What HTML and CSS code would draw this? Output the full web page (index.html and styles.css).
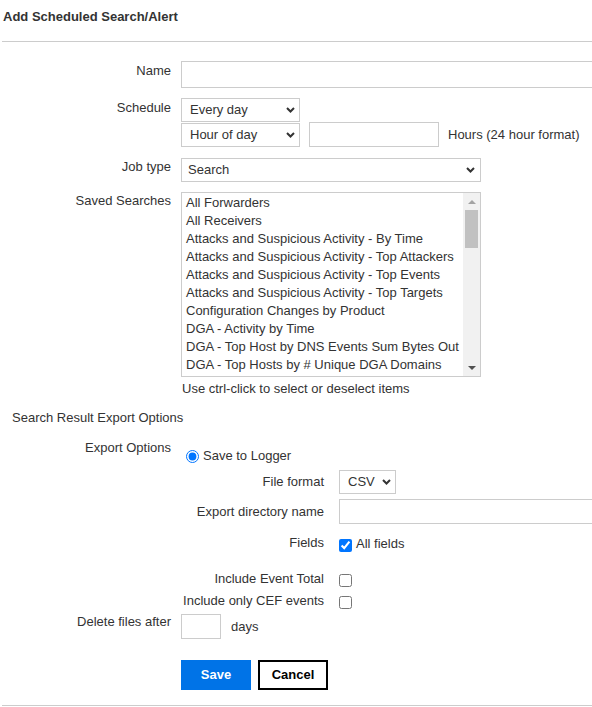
FILE: index.html
```html
<!DOCTYPE html>
<html>
<head>
<meta charset="utf-8">
<title>Add Scheduled Search/Alert</title>
<link rel="stylesheet" href="styles.css">
</head>
<body>
<div class="page">
  <div class="title">Add Scheduled Search/Alert</div>
  <div class="divider"></div>

  <form class="form">
    <div class="row r-name">
      <label class="lbl lbl-name">Name</label>
      <div class="ctl"><input class="txt name-input" type="text"></div>
    </div>

    <div class="row r-sched">
      <label class="lbl lbl-sched">Schedule</label>
      <div class="ctl">
        <div class="selwrap w-every">
          <select class="sel"><option>Every day</option></select>
          <svg class="chev" viewBox="0 0 9 6" width="9" height="6"><path d="M1 1 L4.5 4.5 L8 1" fill="none" stroke="#333" stroke-width="2"/></svg>
        </div>
        <div class="sched-line">
          <div class="selwrap w-hour">
            <select class="sel"><option>Hour of day</option></select>
            <svg class="chev" viewBox="0 0 9 6" width="9" height="6"><path d="M1 1 L4.5 4.5 L8 1" fill="none" stroke="#333" stroke-width="2"/></svg>
          </div>
          <input class="txt hours-input" type="text">
          <span class="hours-hint">Hours (24 hour format)</span>
        </div>
      </div>
    </div>

    <div class="row r-job">
      <label class="lbl lbl-job">Job type</label>
      <div class="ctl">
        <div class="selwrap w-job">
          <select class="sel"><option>Search</option></select>
          <svg class="chev" viewBox="0 0 9 6" width="9" height="6"><path d="M1 1 L4.5 4.5 L8 1" fill="none" stroke="#333" stroke-width="2"/></svg>
        </div>
      </div>
    </div>

    <div class="row r-saved">
      <label class="lbl lbl-saved">Saved Searches</label>
      <div class="ctl">
        <div class="listbox">
          <div class="items">
            <div class="item">All Forwarders</div>
            <div class="item">All Receivers</div>
            <div class="item">Attacks and Suspicious Activity - By Time</div>
            <div class="item">Attacks and Suspicious Activity - Top Attackers</div>
            <div class="item">Attacks and Suspicious Activity - Top Events</div>
            <div class="item">Attacks and Suspicious Activity - Top Targets</div>
            <div class="item">Configuration Changes by Product</div>
            <div class="item">DGA - Activity by Time</div>
            <div class="item">DGA - Top Host by DNS Events Sum Bytes Out</div>
            <div class="item">DGA - Top Hosts by # Unique DGA Domains</div>
          </div>
          <div class="sb">
            <div class="sb-btn"><span class="tri-up"></span></div>
            <div class="sb-thumb"></div>
            <div class="sb-fill"></div>
            <div class="sb-btn"><span class="tri-down"></span></div>
          </div>
        </div>
        <div class="list-hint">Use ctrl-click to select or deselect items</div>
      </div>
    </div>

    <div class="section">Search Result Export Options</div>

    <div class="row r-export">
      <label class="lbl">Export Options</label>
      <div class="ctl ctl-export">
        <label class="radio-line"><input type="radio" class="radio" name="exp" checked>Save to Logger</label>

        <div class="sub sub-file">
          <span class="sublbl">File format</span>
          <div class="selwrap w-csv">
            <select class="sel"><option>CSV</option></select>
            <svg class="chev" viewBox="0 0 9 6" width="9" height="6"><path d="M1 1 L4.5 4.5 L8 1" fill="none" stroke="#333" stroke-width="2"/></svg>
          </div>
        </div>

        <div class="sub sub-dir">
          <span class="sublbl">Export directory name</span>
          <input class="txt dir-input" type="text">
        </div>

        <div class="sub sub-check sub-fields">
          <span class="sublbl">Fields</span>
          <input type="checkbox" class="cb" checked>
          <span class="cb-text">All fields</span>
        </div>

        <div class="sub sub-check sub-total">
          <span class="sublbl">Include Event Total</span>
          <input type="checkbox" class="cb">
        </div>

        <div class="sub sub-check sub-cef">
          <span class="sublbl">Include only CEF events</span>
          <input type="checkbox" class="cb">
        </div>
      </div>
    </div>

    <div class="row r-delete">
      <label class="lbl">Delete files after</label>
      <div class="ctl del-line">
        <input class="txt del-input" type="text">
        <span class="days">days</span>
      </div>
    </div>

    <div class="buttons">
      <button type="button" class="btn btn-save">Save</button>
      <button type="button" class="btn btn-cancel">Cancel</button>
    </div>
  </form>

  <div class="divider bottom"></div>
</div>
</body>
</html>
```

FILE: styles.css
```css
html, body {
  margin: 0;
  padding: 0;
  overflow: hidden;
  background: #fff;
}

body {
  font-family: "Liberation Sans", Arial, sans-serif;
  font-size: 13px;
  line-height: 16px;
  color: #333;
}

.page {
  width: 592px;
  overflow: hidden;
}

.title {
  font-weight: bold;
  padding: 9px 0 0 3px;
  height: 16px;
}

.divider {
  margin: 16px 0 0 2px;
  height: 0;
  border-top: 1px solid #cccccc;
}

.divider.bottom {
  margin-top: 15px;
}

.form {
  margin: 0;
}

.row {
  display: flex;
  align-items: flex-start;
}

.lbl {
  flex: none;
  width: 171px;
  text-align: right;
}

.ctl {
  margin-left: 10px;
  flex: none;
}

.r-name { margin-top: 19px; }
.r-sched { margin-top: 10px; }
.r-job { margin-top: 11px; }
.r-saved { margin-top: 10px; }
.r-export { margin-top: 14px; }
.r-delete { margin-top: 5px; }

.lbl-name { padding-top: 2px; }
.lbl-sched { padding-top: 2px; }
.lbl-job { padding-top: 1px; }
.lbl-saved { padding-top: 1px; }

.txt {
  box-sizing: border-box;
  border: 1px solid #cccccc;
  border-radius: 0;
  background: #fff;
  margin: 0;
  padding: 0 6px;
  font: inherit;
  color: #333;
  outline: none;
  display: block;
}

/* fields that continue past the right edge of the frame */
.name-input {
  width: 411px;
  height: 27px;
  border-right: none;
}

.selwrap {
  position: relative;
  display: block;
}

.sel {
  -webkit-appearance: none;
  appearance: none;
  box-sizing: border-box;
  border: 1px solid #cccccc;
  border-radius: 0;
  background: #fff;
  margin: 0;
  padding: 0 0 0 8px;
  height: 24px;
  width: 100%;
  font: inherit;
  color: #333;
  outline: none;
  display: block;
}

.chev {
  position: absolute;
  right: 5px;
  top: 9px;
  pointer-events: none;
}

.w-every { width: 119px; }
.w-hour { width: 119px; margin-top: 1px; }
.w-job { width: 300px; }
.w-job .sel { padding-left: 6px; }
.w-job .chev { right: 6px; }
.w-csv { width: 57px; }

.sched-line {
  display: flex;
  align-items: flex-start;
}

.hours-input {
  width: 130px;
  height: 25px;
  margin-left: 9px;
}

.hours-hint {
  margin-left: 9px;
  align-self: center;
  white-space: nowrap;
}

/* list box */
.listbox {
  box-sizing: border-box;
  width: 300px;
  height: 185px;
  border: 1px solid #cccccc;
  background: #fff;
  display: flex;
  overflow: hidden;
}

.items {
  flex: 1;
  padding: 1px 0 0 4px;
  overflow: hidden;
}

.item {
  line-height: 18px;
  white-space: nowrap;
}

.sb {
  flex: none;
  width: 17px;
  background: #f1f1f1;
  display: flex;
  flex-direction: column;
}

.sb-btn {
  height: 17px;
  display: flex;
  align-items: center;
  justify-content: center;
}

.tri-up {
  width: 0;
  height: 0;
  border-left: 4px solid transparent;
  border-right: 4px solid transparent;
  border-bottom: 4px solid #a3a3a3;
}

.tri-down {
  width: 0;
  height: 0;
  border-left: 4px solid transparent;
  border-right: 4px solid transparent;
  border-top: 4px solid #505050;
}

.sb-thumb {
  height: 38px;
  margin: 0 2px;
  background: #c1c1c1;
}

.sb-fill {
  flex: 1;
}

.list-hint {
  margin-top: 4px;
  margin-left: 1px;
  white-space: nowrap;
}

.section {
  margin-top: 13px;
  padding-left: 12px;
}

/* export options */
.ctl-export {
  padding-top: 8px;
}

.radio-line {
  display: flex;
  align-items: center;
  height: 16px;
  white-space: nowrap;
}

.radio {
  margin: 0 4px 0 5px;
  width: 13px;
  height: 13px;
}

.sub {
  display: flex;
  align-items: center;
}

.sublbl {
  flex: none;
  width: 143px;
  margin-right: 15px;
  text-align: right;
  white-space: nowrap;
}

.sub-file { margin-top: 6px; }
.sub-dir { margin-top: 5px; }

.dir-input {
  width: 253px;
  height: 25px;
  border-right: none;
}

.sub-check {
  align-items: flex-start;
}

.cb {
  margin: 3px 0 0 0;
  width: 13px;
  height: 13px;
}

.cb-text {
  margin-left: 4px;
  margin-top: 1px;
}

.sub-fields { margin-top: 11px; }
.sub-fields .cb { margin-top: 4px; }
.sub-total { margin-top: 19px; }
.sub-cef { margin-top: 6px; }

.del-line {
  display: flex;
  align-items: center;
}

.del-input {
  width: 40px;
  height: 25px;
}

.days {
  margin-left: 10px;
}

.buttons {
  margin: 21px 0 0 181px;
  display: flex;
  gap: 7px;
}

.btn {
  box-sizing: border-box;
  width: 70px;
  height: 30px;
  margin: 0;
  padding: 0;
  font: inherit;
  font-weight: bold;
  border-radius: 0;
  cursor: pointer;
}

.btn-save {
  background: #0073e7;
  color: #fff;
  border: none;
}

.btn-cancel {
  background: #fff;
  color: #000;
  border: 2px solid #000;
}
```
